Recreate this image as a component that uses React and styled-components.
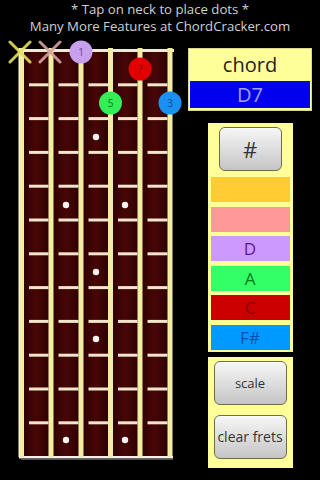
import styled, { createGlobalStyle } from "styled-components";

const GlobalStyle = createGlobalStyle`
  html, body {
    margin: 0;
    padding: 0;
    background: #000;
  }
  body {
    width: 320px;
    height: 480px;
    overflow: hidden;
    font-family: "Open Sans", "DejaVu Sans", sans-serif;
  }
`;

const Screen = styled.div`
  width: 320px;
  height: 480px;
  background: #000;
  display: flex;
  flex-direction: column;
`;

const Header = styled.div`
  height: 38px;
  display: flex;
  flex-direction: column;
  align-items: center;
  justify-content: center;
  color: #d0d0d0;
  font-size: 13.2px;
  line-height: 17px;
  padding-bottom: 3px;
  box-sizing: border-box;
`;

const Main = styled.div`
  display: flex;
  flex: 1;
`;

const Neck = styled.svg`
  display: block;
  width: 186px;
  height: 432px;
  flex-shrink: 0;
`;

const Side = styled.div`
  width: 124px;
  margin-left: 2px;
  padding-top: 10px;
  display: flex;
  flex-direction: column;
  align-items: center;
`;

const ChordBox = styled.div`
  width: 124px;
  height: 63px;
  box-sizing: border-box;
  background: #ffff99;
  border: 1px solid #d8d890;
  padding: 0 1px 2px;
  display: flex;
  flex-direction: column;
`;

const ChordLabel = styled.div`
  flex: 1;
  display: flex;
  align-items: center;
  justify-content: center;
  font-size: 20px;
  color: #222;
  padding-bottom: 1px;
`;

const ChordName = styled.div`
  height: 27px;
  background: #0000ee;
  color: #a0a0ff;
  font-size: 20px;
  display: flex;
  align-items: center;
  justify-content: center;
`;

const Panel = styled.div`
  width: 85px;
  box-sizing: border-box;
  background: #ffff99;
  margin-top: ${(p) => p.$top}px;
  padding: ${(p) => p.$pad};
  display: flex;
  flex-direction: column;
  align-items: center;
  gap: ${(p) => p.$gap}px;
`;

const Button = styled.button`
  width: ${(p) => p.$w}px;
  height: ${(p) => p.$h}px;
  flex-shrink: 0;
  border: 1px solid #6d6d4a;
  border-radius: 6px;
  background: linear-gradient(#f6f6f6, #d9d9d9 60%, #c4c4c4);
  color: #333;
  font-family: "Open Sans", "DejaVu Sans", sans-serif;
  font-size: ${(p) => p.$size}px;
  padding: 0;
  margin: 0 0 ${(p) => p.$after || 0}px;
  box-shadow: inset 0 1px 0 #fff;
`;

const NoteBar = styled.div`
  width: 79px;
  height: 25px;
  flex-shrink: 0;
  background: ${(p) => p.$bg};
  color: ${(p) => p.$fg};
  font-size: 17px;
  display: flex;
  align-items: center;
  justify-content: center;
`;

const STRINGS = [21.5, 51, 81, 110.5, 140, 170];
const FRETS = Array.from({ length: 13 }, (_, i) => 51 + i * 33.8);

const INLAYS = [
  [96, 137],
  [66, 205],
  [125, 205],
  [96, 272],
  [96, 339],
  [66, 440],
  [125, 440],
];

const DOTS = [
  { x: 81, y: 52, fill: "#c8a0f0", text: "1", fg: "#6a3aa8" },
  { x: 140, y: 69, fill: "#e00000", text: "7", fg: "#900000" },
  { x: 110.5, y: 103, fill: "#33ee55", text: "5", fg: "#0a7a20" },
  { x: 170, y: 103, fill: "#1a90f0", text: "3", fg: "#0a4a90" },
];

const MUTES = [
  { x: 20, color: "#e6df5a" },
  { x: 50, color: "#d8a0a0" },
];

const NOTES = [
  { bg: "#ffcc33", fg: "#a06000", label: "" },
  { bg: "#ff9999", fg: "#a04040", label: "" },
  { bg: "#cc99ff", fg: "#5a1a99", label: "D" },
  { bg: "#33ff66", fg: "#007a1a", label: "A" },
  { bg: "#cc0000", fg: "#7a0000", label: "C" },
  { bg: "#0099ff", fg: "#0050a8", label: "F#" },
];

function Fretboard() {
  return (
    <Neck viewBox="0 38 186 432">
      <defs>
        <linearGradient id="wood" x1="0" x2="1" y1="0" y2="0">
          <stop offset="0" stopColor="#2a0000" />
          <stop offset="0.5" stopColor="#480606" />
          <stop offset="1" stopColor="#2a0000" />
        </linearGradient>
      </defs>
      {STRINGS.slice(0, -1).map((x, i) => (
        <rect
          key={`w${i}`}
          x={x}
          y={50}
          width={STRINGS[i + 1] - x}
          height={407}
          fill="url(#wood)"
        />
      ))}
      <rect x={18} y={49} width={156} height={3} fill="#f0ead2" />
      {FRETS.slice(1, -1).map((y, f) =>
        STRINGS.slice(0, -1).map((x, i) => (
          <rect
            key={`f${f}-${i}`}
            x={x + 7.5}
            y={y - 1.5}
            width={STRINGS[i + 1] - x - 10}
            height={3}
            fill="#f0e6cc"
          />
        ))
      )}
      <rect x={19} y={456} width={154} height={2.5} fill="#f4f0ea" />
      <rect x={21} y={458.5} width={152} height={1.5} fill="#555" />
      {STRINGS.map((x, i) => (
        <rect
          key={`s${i}`}
          x={x - 2.5}
          y={48}
          width={5}
          height={409}
          fill="#f3eda4"
        />
      ))}
      <rect x={18.5} y={48} width={1} height={409} fill="#fffbe0" />
      {INLAYS.map(([x, y], i) => (
        <circle key={`i${i}`} cx={x} cy={y} r={3.2} fill="#f8f2f2" />
      ))}
      {MUTES.map((m, i) => (
        <g key={`m${i}`} stroke={m.color} strokeWidth={3} strokeLinecap="round" opacity={0.9}>
          <line x1={m.x - 10} y1={42} x2={m.x + 10} y2={62} />
          <line x1={m.x + 10} y1={42} x2={m.x - 10} y2={62} />
        </g>
      ))}
      {DOTS.map((d, i) => (
        <g key={`d${i}`}>
          <circle cx={d.x} cy={d.y} r={11.5} fill={d.fill} />
          <text
            x={d.x}
            y={d.y + 3.5}
            textAnchor="middle"
            fontSize={10}
            fontFamily="Open Sans, DejaVu Sans, sans-serif"
            fill={d.fg}
          >
            {d.text}
          </text>
        </g>
      ))}
    </Neck>
  );
}

export default function App() {
  return (
    <>
      <GlobalStyle />
      <Screen>
        <Header>
          <div>* Tap on neck to place dots *</div>
          <div>Many More Features at ChordCracker.com</div>
        </Header>
        <Main>
          <Fretboard />
          <Side>
            <ChordBox>
              <ChordLabel>chord</ChordLabel>
              <ChordName>D7</ChordName>
            </ChordBox>
            <Panel $top={12} $pad="4px 3px 2px" $gap={4.5}>
              <Button $w={63} $h={44} $size={22} $after={1.5}>
                #
              </Button>
              {NOTES.map((n, i) => (
                <NoteBar key={i} $bg={n.bg} $fg={n.fg}>
                  {n.label}
                </NoteBar>
              ))}
            </Panel>
            <Panel $top={5} $pad="4px 3px 9px" $gap={10}>
              <Button $w={73} $h={44} $size={13}>
                scale
              </Button>
              <Button $w={73} $h={44} $size={14}>
                clear frets
              </Button>
            </Panel>
          </Side>
        </Main>
      </Screen>
    </>
  );
}
